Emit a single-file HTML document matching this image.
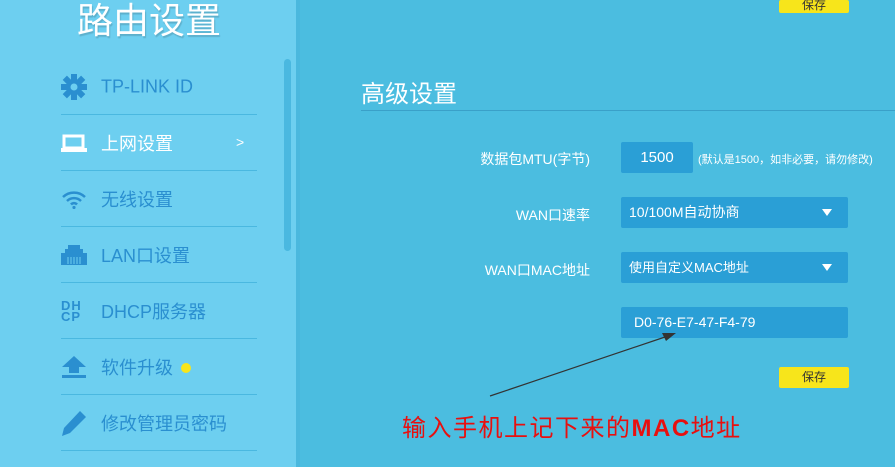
<!DOCTYPE html><html><head><meta charset="utf-8"><style>
*{margin:0;padding:0;box-sizing:border-box}
body{width:895px;height:467px;overflow:hidden;background:#4bbde0;font-family:"Liberation Sans","Noto Sans CJK SC",sans-serif;position:relative}
.side{position:absolute;left:0;top:0;width:300px;height:467px;background:#6dcff0;border-right:4px solid #4ab8de}
.title{position:absolute;left:77px;top:0;font-size:36px;color:#fff;text-shadow:1px 2px 1px rgba(0,0,0,.15);line-height:42px}
.scroll{position:absolute;left:284px;top:59px;width:7px;height:192px;border-radius:4px;background:#4ab8e0}
.item{position:absolute;left:61px;width:196px;height:56px;border-bottom:1px solid #4ab8e0;color:#2a8fd0;font-size:18px}
.item .t{position:absolute;left:40px;top:50%;transform:translateY(-50%)}
.item svg,.item .ic{position:absolute;left:0;top:50%;transform:translateY(-50%)}
.hd{position:absolute;left:361px;top:74px;color:#fff;font-size:24px}
.hl{position:absolute;left:361px;top:110px;width:534px;height:1px;background:#3aa0c8}
.lab{position:absolute;right:305px;color:#fff;font-size:14px}
.box{position:absolute;left:621px;background:#2a9fd6;color:#fff;border-radius:2px;font-size:15px;line-height:31px;height:31px}
.tri{position:absolute;right:16px;top:12px;width:0;height:0;border-left:5px solid transparent;border-right:5px solid transparent;border-top:7px solid #fff}
.btn{position:absolute;left:779px;width:70px;background:#f7e51b;border-radius:2px;color:#333;font-size:12px;text-align:center}
</style></head><body>
<div class="side">
<div class="title">路由设置</div>
<div class="scroll"></div>
<div class="item" style="top:59px"><svg width="26" height="26" viewBox="0 0 26 26"><g fill="#2a8fd0"><circle cx="13" cy="13" r="8"/><rect x="10" y="0" width="6" height="26"/><rect x="0" y="10" width="26" height="6"/><rect x="10" y="0" width="6" height="26" transform="rotate(45 13 13)"/><rect x="10" y="0" width="6" height="26" transform="rotate(-45 13 13)"/></g><circle cx="13" cy="13" r="3.5" fill="#6dcff0"/></svg><span class="t">TP-LINK ID</span></div>
<div class="item" style="top:115px;color:#fff"><svg width="26" height="18" viewBox="0 0 26 18"><rect x="3" y="2" width="19" height="12" fill="none" stroke="#fff" stroke-width="3"/><rect x="0" y="14" width="26" height="4" fill="#fff"/></svg><span class="t">上网设置</span><span style="position:absolute;left:175px;top:19px;font-size:14px">&gt;</span></div>
<div class="item" style="top:171px"><svg width="26" height="20" viewBox="0 0 26 20"><g fill="none" stroke="#2a8fd0" stroke-width="2.5"><path d="M2 8a16 16 0 0 1 22 0"/><path d="M6 12a10 10 0 0 1 14 0"/><path d="M10 15.5a4 4 0 0 1 6 0"/></g><circle cx="13" cy="18.5" r="1.6" fill="#2a8fd0"/></svg><span class="t">无线设置</span></div>
<div class="item" style="top:227px"><svg width="26" height="20" viewBox="0 0 26 20"><path d="M7 0h12v4h3v4h4v12H0V8h4V4h3z" fill="#2a8fd0"/><g stroke="#6dcff0" stroke-width="1"><path d="M7 12v7M10 12v7M13 12v7M16 12v7M19 12v7"/></g></svg><span class="t">LAN口设置</span></div>
<div class="item" style="top:283px"><span class="ic" style="font-weight:bold;font-size:13px;line-height:11px;letter-spacing:1px">DH<br>CP</span><span class="t">DHCP服务器</span></div>
<div class="item" style="top:339px"><svg width="26" height="22" viewBox="0 0 26 22"><path d="M13 0L25 11h-7v6H8v-6H1z" fill="#2a8fd0"/><rect x="1" y="19" width="24" height="3" fill="#2a8fd0"/></svg><span class="t">软件升级</span><span style="position:absolute;left:120px;top:24px;width:10px;height:10px;border-radius:50%;background:#f7e51b"></span></div>
<div class="item" style="top:395px"><svg width="26" height="26" viewBox="0 0 26 26"><path d="M19 1l6 6L9 23l-8 3 2-8z" fill="#2a8fd0"/></svg><span class="t">修改管理员密码</span></div>
</div>
<div class="btn" style="top:0;height:13px;line-height:10px">保存</div>
<div class="hd">高级设置</div><div class="hl"></div>
<div class="lab" style="top:149px">数据包MTU(字节)</div>
<div class="box" style="top:142px;width:72px;text-align:center">1500</div>
<div style="position:absolute;left:698px;top:151px;color:#fff;font-size:11px">(默认是1500，如非必要，请勿修改)</div>
<div class="lab" style="top:205px">WAN口速率</div>
<div class="box" style="top:197px;width:227px;padding-left:8px;font-size:14px">10/100M自动协商<span class="tri"></span></div>
<div class="lab" style="top:260px">WAN口MAC地址</div>
<div class="box" style="top:252px;width:227px;padding-left:8px;font-size:13px">使用自定义MAC地址<span class="tri"></span></div>
<div class="box" style="top:307px;width:227px;padding-left:13px;font-size:14px">D0-76-E7-47-F4-79</div>
<div class="btn" style="top:367px;height:21px;line-height:21px">保存</div>
<svg style="position:absolute;left:0;top:0" width="895" height="467"><line x1="490" y1="396" x2="668" y2="336" stroke="#333" stroke-width="1.2"/><path d="M676 333l-14 0 4 8z" fill="#333"/></svg>
<div style="position:absolute;left:402px;top:408px;color:#e8100f;font-size:24px;letter-spacing:1.5px;white-space:nowrap">输入手机上记下来的<b>MAC</b>地址</div>
</body></html>
